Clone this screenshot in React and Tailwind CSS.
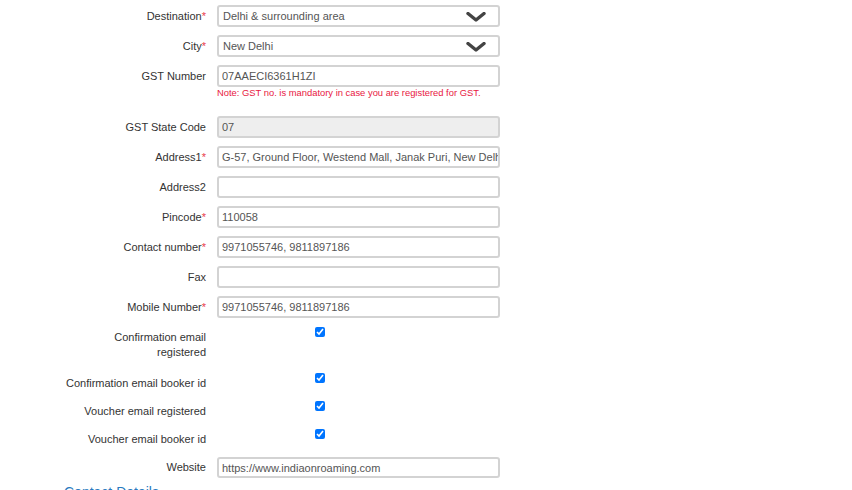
import React from "react";

const font = { fontFamily: '"Liberation Sans", Arial, sans-serif' };

function Label({ text, req, className = "" }) {
  return (
    <div className={"w-[142px] shrink-0 text-right text-[11px] text-[#333] " + className}>
      {text}
      {req && <span className="text-[#e8404a]">*</span>}
    </div>
  );
}

function Field({ value = "", bg = "bg-white", select = false, h = "h-[22px]" }) {
  return (
    <div
      className={
        "relative w-[283px] " + h + " border-2 border-[#d3d3d3] rounded-[3px] overflow-hidden " + bg
      }
    >
      <input
        readOnly
        value={value}
        className={
          "block w-full h-full bg-transparent outline-none text-[11px] text-[#555] " +
          (select ? "pl-[4px] pr-[40px]" : "pl-[3px] pr-0")
        }
      />
      {select && (
        <svg
          className="absolute right-[12px] top-[5px]"
          width="20"
          height="10"
          viewBox="0 0 20 10"
        >
          <polyline
            points="2,1.5 10,8 18,1.5"
            fill="none"
            stroke="#444"
            strokeWidth="3.4"
            strokeLinecap="round"
            strokeLinejoin="round"
          />
        </svg>
      )}
    </div>
  );
}

function Row({ label, req, children, className = "" }) {
  return (
    <div className={"flex items-center gap-[11px] " + className}>
      <Label text={label} req={req} />
      {children}
    </div>
  );
}

function CheckRow({ label, className = "" }) {
  return (
    <div className={"flex items-start gap-[11px] " + className}>
      <Label text={label} className="pt-[5px] leading-[15px]" />
      <div className="pl-[98px] pt-[2px]">
        <input
          type="checkbox"
          defaultChecked
          className="block m-0 w-[10px] h-[10px] accent-[#0075ff]"
        />
      </div>
    </div>
  );
}

export default function App() {
  return (
    <div className="w-[852px] h-[490px] bg-white overflow-hidden" style={font}>
      <div className="pl-[64px] pt-[5px]">
        <Row label="Destination" req className="mb-[8px]">
          <Field value="Delhi & surrounding area" select />
        </Row>
        <Row label="City" req className="mb-[8px]">
          <Field value="New Delhi" select />
        </Row>
        <div className="flex items-start gap-[11px] mb-[8px] h-[43px]">
          <Label text="GST Number" className="leading-[22px]" />
          <div>
            <Field value="07AAECI6361H1ZI" />
            <div className="text-[9.4px] text-[#e8173f] leading-[12px] mt-[0px]">
              Note: GST no. is mandatory in case you are registered for GST.
            </div>
          </div>
        </div>
        <Row label="GST State Code" className="mb-[8px]">
          <Field value="07" bg="bg-[#eeeeee]" />
        </Row>
        <Row label="Address1" req className="mb-[8px]">
          <Field value="G-57, Ground Floor, Westend Mall, Janak Puri, New Delhi" />
        </Row>
        <Row label="Address2" className="mb-[8px]">
          <Field />
        </Row>
        <Row label="Pincode" req className="mb-[8px]">
          <Field value="110058" />
        </Row>
        <Row label="Contact number" req className="mb-[8px]">
          <Field value="9971055746, 9811897186" />
        </Row>
        <Row label="Fax" className="mb-[8px]">
          <Field />
        </Row>
        <Row label="Mobile Number" req className="mb-[7px]">
          <Field value="9971055746, 9811897186" />
        </Row>
        <CheckRow label="Confirmation email registered" className="mb-[11px]" />
        <CheckRow label="Confirmation email booker id" className="mb-[8px]" />
        <CheckRow label="Voucher email registered" className="mb-[8px]" />
        <CheckRow label="Voucher email booker id" className="mb-[10px]" />
        <Row label="Website">
          <Field value="https://www.indiaonroaming.com" h="h-[21px]" />
        </Row>
        <div className="mt-[6px] text-[14px] leading-[16px] text-[#2a7ac0]">
          Contact Details
        </div>
      </div>
    </div>
  );
}
